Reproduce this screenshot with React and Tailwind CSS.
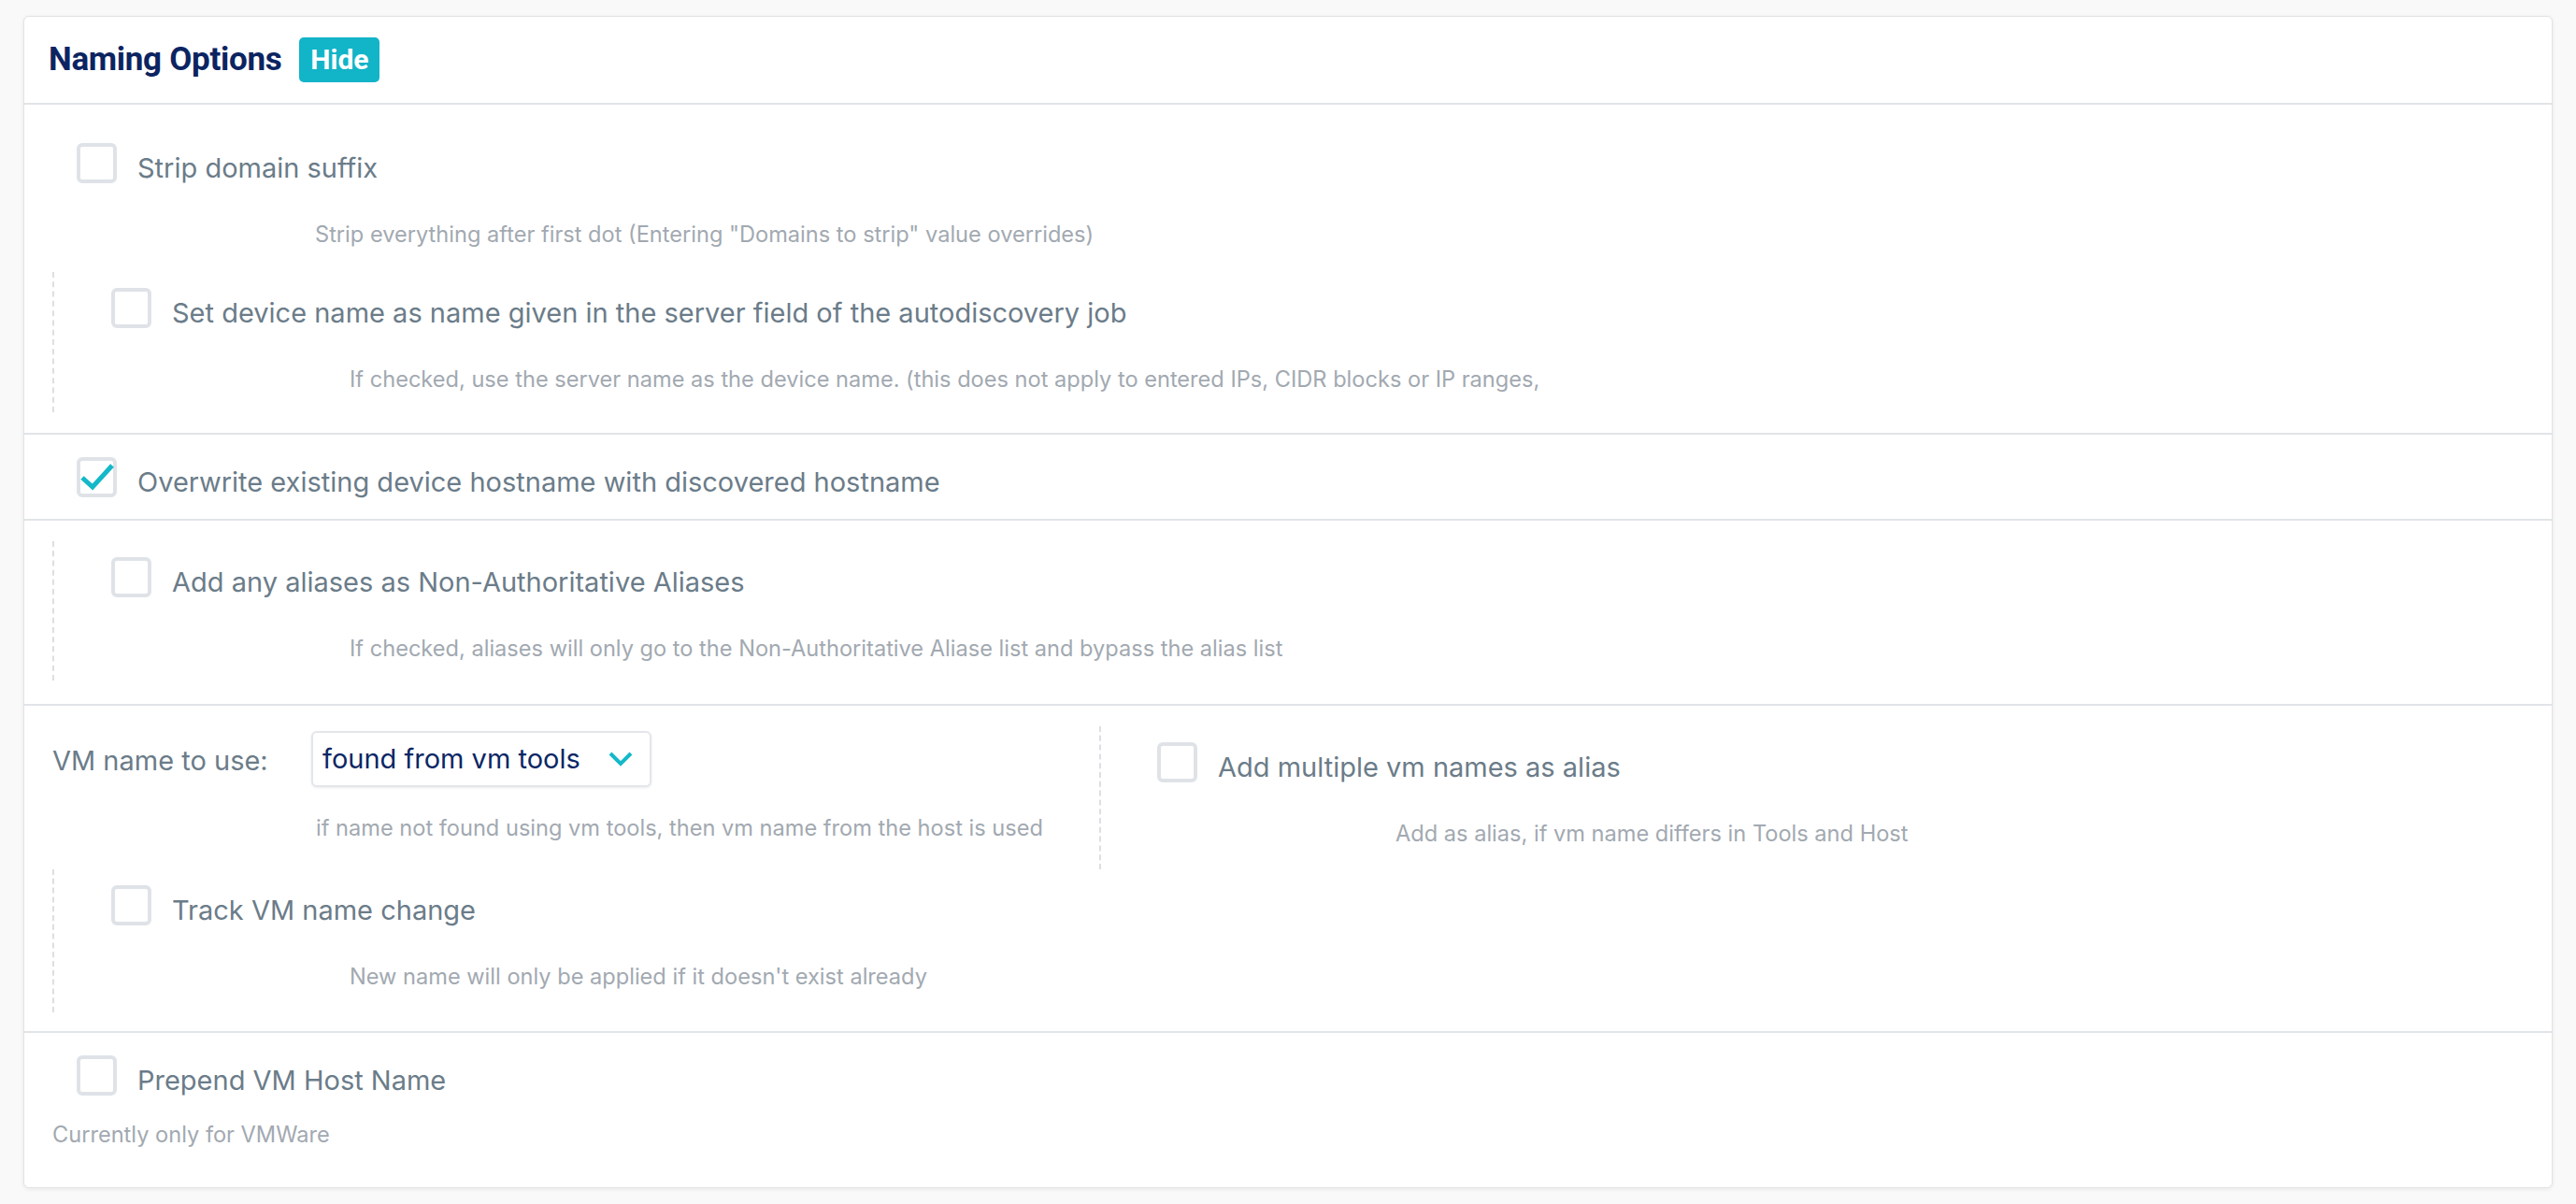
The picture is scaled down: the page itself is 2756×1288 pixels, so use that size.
import React, { useState } from 'react';

// checkbox box used by every option row
const Box = ({ checked }) => (
  <span className="relative shrink-0 w-[43px] h-[43px] border-[4px] border-[#dfe3e8] rounded-[6px] bg-white">
    {checked && (
      <svg className="absolute -left-[4px] -top-[4px]" width="43" height="43" viewBox="0 0 43 43">
        <polyline points="6,22 17,32 38,9" fill="none" stroke="#14b8c8" strokeWidth="5" strokeLinejoin="miter" />
      </svg>
    )}
  </span>
);

const CheckItem = ({ label, help, checked = false, indent = true }) => {
  const [on, setOn] = useState(checked);
  return (
    <div>
      <label
        className={`flex items-center h-[43px] cursor-pointer ${indent ? 'ml-[26px]' : ''}`}
        onClick={() => setOn(!on)}
      >
        <Box checked={on} />
        <span className="ml-[22px] pt-[10px] text-[29px] text-[#6b7c89]">{label}</span>
      </label>
      {help && (
        <p className={`mt-[37px] text-[23.6px] leading-[36px] text-[#a2a9b1] ${indent ? 'ml-[281px]' : 'ml-[255px]'}`}>
          {help}
        </p>
      )}
    </div>
  );
};

// nested block with the dashed line on its left
const Nested = ({ children, className = '' }) => (
  <div className={`border-l-2 border-dashed border-[#dcdfe4] pl-[61px] pt-[17px] ${className}`}>{children}</div>
);

const App = () => {
  const [open, setOpen] = useState(true);

  return (
    <div className="min-h-screen bg-[#f9f9f9] pt-[17px] px-[25px]" style={{ fontFamily: 'Inter, "Noto Sans", sans-serif' }}>
      <div className="bg-white border border-[#e3e3e3] rounded-[6px] shadow-[0_1px_4px_rgba(0,0,0,0.08)]">
        {/* Header */}
        <div className="flex items-center h-[94px] pl-[26px] border-b-2 border-[#e1e4e8]">
          <h2 className="text-[35px] font-bold tracking-[-0.3px] text-[#0c2461]" style={{ fontFamily: 'Roboto, sans-serif' }}>
            Naming Options
          </h2>
          <button
            className="ml-[19px] w-[86px] h-[48px] rounded-[5px] bg-[#12b4c8] text-white text-[30px] font-bold leading-none"
            style={{ fontFamily: 'Roboto, sans-serif' }}
            onClick={() => setOpen(!open)}
          >
            {open ? 'Hide' : 'Show'}
          </button>
        </div>

        {open && (
          <>
            {/* Strip domain */}
            <div className="px-[30px] pt-[41px] pb-[22px] border-b-2 border-[#e1e4e8]">
              <CheckItem
                label="Strip domain suffix"
                help={'Strip everything after first dot (Entering "Domains to strip" value overrides)'}
              />
              <Nested className="mt-[22px] pb-[17px]">
                <CheckItem
                  indent={false}
                  label="Set device name as name given in the server field of the autodiscovery job"
                  help="If checked, use the server name as the device name. (this does not apply to entered IPs, CIDR blocks or IP ranges,"
                />
              </Nested>
            </div>

            {/* Overwrite hostname */}
            <div className="px-[30px] pt-[24px] pb-[23px] border-b-2 border-[#e1e4e8]">
              <CheckItem checked label="Overwrite existing device hostname with discovered hostname" />
            </div>

            {/* Aliases */}
            <div className="px-[30px] pt-[22px] pb-[25px] border-b-2 border-[#e1e4e8]">
              <Nested className="pb-[16px]">
                <CheckItem
                  indent={false}
                  label="Add any aliases as Non-Authoritative Aliases"
                  help="If checked, aliases will only go to the Non-Authoritative Aliase list and bypass the alias list"
                />
              </Nested>
            </div>

            {/* VM name */}
            <div className="px-[30px] pt-[22px] pb-[20px] border-b-2 border-[#e1e4e8]">
              <div className="flex">
                <div className="w-[1120px] shrink-0 pt-[5px] pb-[26px]">
                  <div className="flex items-center">
                    <span className="w-[277px] pt-[4px] text-[29px] text-[#6b7c89]">VM name to use:</span>
                    <div className="flex items-center justify-between w-[364px] h-[60px] pl-[10px] pr-[18px] border-2 border-[#e3e6ea] rounded-[6px] bg-white shadow-[0_1px_3px_rgba(0,0,0,0.08)]">
                      <span className="text-[29px] text-[#0b2765]">found from vm tools</span>
                      <svg width="26" height="16" viewBox="0 0 26 16">
                        <polyline points="2,2 13,13 24,2" fill="none" stroke="#14b8c8" strokeWidth="4" />
                      </svg>
                    </div>
                  </div>
                  <p className="ml-[282px] mt-[26px] text-[23.6px] leading-[36px] text-[#a2a9b1]">
                    if name not found using vm tools, then vm name from the host is used
                  </p>
                </div>
                <div className="flex-1 border-l-2 border-dashed border-[#dcdfe4] pl-[60px] pt-[17px]">
                  <CheckItem
                    indent={false}
                    label="Add multiple vm names as alias"
                    help="Add as alias, if vm name differs in Tools and Host"
                  />
                </div>
              </div>
              <Nested className="pb-[20px]">
                <CheckItem
                  indent={false}
                  label="Track VM name change"
                  help="New name will only be applied if it doesn't exist already"
                />
              </Nested>
            </div>

            {/* Prepend host */}
            <div className="px-[30px] pt-[24px] pb-[38px]">
              <CheckItem label="Prepend VM Host Name" />
              <p className="mt-[24px] text-[23.6px] leading-[36px] text-[#a2a9b1]">Currently only for VMWare</p>
            </div>
          </>
        )}
      </div>
    </div>
  );
};

export default App;
